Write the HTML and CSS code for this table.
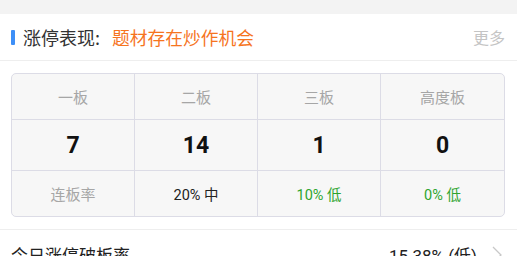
FILE: index.html
```html
<!DOCTYPE html>
<html lang="zh">
<head>
<meta charset="utf-8">
<link rel="stylesheet" href="styles.css">
</head>
<body>
<div class="topband"></div>
<section class="card">
  <div class="card-head">
    <div class="title">
      <span class="mark"></span>
      <span class="label">涨停表现:</span>
      <span class="theme">题材存在炒作机会</span>
    </div>
    <span class="more">更多</span>
  </div>
  <div class="card-body">
    <div class="grid">
      <div class="cell head">一板</div>
      <div class="cell head">二板</div>
      <div class="cell head">三板</div>
      <div class="cell head">高度板</div>
      <div class="cell num">7</div>
      <div class="cell num">14</div>
      <div class="cell num">1</div>
      <div class="cell num">0</div>
      <div class="cell head">连板率</div>
      <div class="cell rate">20% 中</div>
      <div class="cell rate low">10% 低</div>
      <div class="cell rate low">0% 低</div>
    </div>
  </div>
  <div class="row">
    <span class="row-label">今日涨停破板率</span>
    <span class="row-value">15.38% (低)<svg class="chev" width="12" height="20" viewBox="0 0 12 20"><path d="M2 2 L10 10 L2 18" fill="none" stroke="#c8c8c8" stroke-width="1.3"/></svg></span>
  </div>
</section>
</body>
</html>
```
FILE: styles.css
```css
* { box-sizing: border-box; }
html, body { margin: 0; padding: 0; background: #fff; }
body {
  font-family: Roboto, "Noto Sans CJK SC", sans-serif;
  color: #222;
  width: 517px;
  overflow: hidden;
}
.topband { height: 14px; background: #f3f3f3; }
.card-head {
  height: 47px;
  border-bottom: 1px solid #eeeeee;
  display: flex;
  align-items: center;
  justify-content: space-between;
  padding: 0 12px 0 11px;
}
.title { display: flex; align-items: center; }
.mark { width: 4px; height: 15px; background: #3d8ff7; margin-right: 8px; border-radius: 1px; }
.label { font-size: 18px; color: #333; font-family: "Noto Sans CJK SC", sans-serif; }
.theme { font-size: 17.75px; color: #f6741e; margin-left: 12px; font-family: "Noto Sans CJK SC", sans-serif; }
.more { font-size: 16px; color: #c4c4c4; font-family: "Noto Sans CJK SC", sans-serif; }
.card-body {
  padding: 12px 12px 12px 11px;
  border-bottom: 1px solid #eeeeee;
}
.grid {
  display: grid;
  grid-template-columns: repeat(4, 1fr);
  grid-template-rows: 46px 51px 45px;
  border: 1px solid #dcdce6;
  border-radius: 5px;
  background: #f7f7f7;
  overflow: hidden;
}
.cell {
  display: flex;
  align-items: center;
  justify-content: center;
  border-right: 1px solid #dcdce6;
  border-bottom: 1px solid #dcdce6;
}
.cell:nth-child(4n) { border-right: none; }
.cell:nth-child(n+9) { border-bottom: none; }
.head { font-size: 15px; color: #a6a6a6; font-family: "Noto Sans CJK SC", sans-serif; }
.num { font-size: 23px; font-weight: 700; color: #111; font-family: Roboto, sans-serif; }
.rate { font-size: 14.5px; color: #222; }
.rate.low { color: #2ea52e; }
.row {
  display: flex;
  justify-content: space-between;
  align-items: center;
  padding: 12px 14px 0 11px;
  font-size: 17px;
  color: #222;
}
.row-label { font-family: "Noto Sans CJK SC", sans-serif; }
.row-value { display: flex; align-items: center; gap: 14px; font-size: 17px; }
.chev { flex: none; }
```
